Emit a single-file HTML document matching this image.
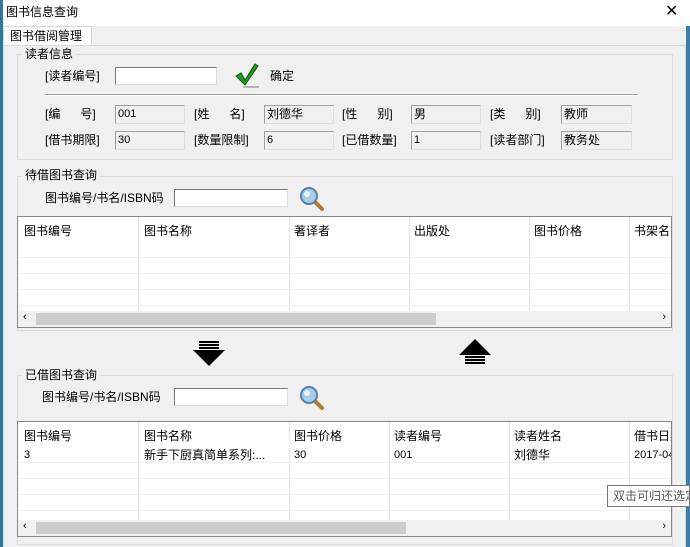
<!DOCTYPE html>
<html><head><meta charset="utf-8"><style>
*{margin:0;padding:0;box-sizing:border-box}
body{width:690px;height:547px;overflow:hidden;background:#f0f0f0;font-family:"Liberation Sans","Noto Sans CJK SC","WenQuanYi Zen Hei",sans-serif;font-size:12px;color:#000;position:relative}
.a{position:absolute;white-space:nowrap}
.t{font-size:12px;line-height:14px}
.ro{position:absolute;height:19px;background:#f0f0f0;border:1px solid #a0a0a0;border-right-color:#e0e0e0;border-bottom-color:#e0e0e0;font-size:11px;line-height:17px;padding-left:2px}
.in{position:absolute;background:#fff;border:1px solid #7a7a7a;border-right-color:#ddd;border-bottom-color:#ddd}
.gb{position:absolute;border:1px solid #dcdcdc}
.tbl{position:absolute;background:#fff;border:1px solid #828790;overflow:hidden}
.col{position:absolute;top:0;bottom:16px;border-left:1px solid #e5e5e5}
.row{position:absolute;left:0;right:0;border-top:1px solid #f0f0f0}
.sb{position:absolute;left:0;right:0;bottom:0;height:16px;background:#f0f0f0}
</style></head><body>
<div class="a" style="left:0;top:0;width:690px;height:26px;background:#fff"></div>
<div class="a t" style="left:6px;top:5px;font-size:12px">图书信息查询</div>
<div class="a" style="left:665px;top:2px;font-size:16px;line-height:20px">✕</div>
<div class="a" style="left:0;top:0;width:3px;height:547px;background:#2d7aa0"></div>
<div class="a" style="left:686px;top:26px;width:4px;height:521px;background:#3c7ea8"></div>
<div class="a" style="left:3px;top:26px;width:89px;height:20px;background:#fff;border:1px solid #d9d9d9;border-bottom:none"></div>
<div class="a t" style="left:10px;top:29px">图书借阅管理</div>
<div class="a" style="left:3px;top:45px;width:683px;height:502px;border:1px solid #d9d9d9;border-bottom:none;background:#f0f0f0"></div>

<div class="gb" style="left:17px;top:54px;width:656px;height:106px"></div>
<div class="a t" style="left:22px;top:47px;background:#f0f0f0;padding:0 3px">读者信息</div>
<div class="a t" style="left:45px;top:69px">[读者编号]</div>
<div class="in" style="left:115px;top:67px;width:102px;height:18px"></div>
<svg class="a" style="left:234px;top:62px" width="26" height="26" viewBox="0 0 26 26"><path d="M2 14 L7 11 L11 18 L21 2 L24 4 L11 23 Z" fill="#1f9a1f" stroke="#0c5a0c" stroke-width="1"/><line x1="9" y1="25" x2="25" y2="25" stroke="#777"/></svg>
<div class="a t" style="left:270px;top:69px">确定</div>
<div class="a" style="left:45px;top:94px;width:593px;height:2px;border-top:1px solid #a0a0a0;border-bottom:1px solid #fff"></div>

<div class="a t" style="left:45px;top:107px">[编&nbsp;&nbsp;&nbsp;&nbsp;&nbsp;&nbsp;号]</div>
<div class="ro" style="left:115px;top:105px;width:70px">001</div>
<div class="a t" style="left:194px;top:107px">[姓&nbsp;&nbsp;&nbsp;&nbsp;&nbsp;&nbsp;名]</div>
<div class="ro" style="left:264px;top:105px;width:70px;font-size:12px">刘德华</div>
<div class="a t" style="left:342px;top:107px">[性&nbsp;&nbsp;&nbsp;&nbsp;&nbsp;&nbsp;别]</div>
<div class="ro" style="left:411px;top:105px;width:70px;font-size:12px">男</div>
<div class="a t" style="left:490px;top:107px">[类&nbsp;&nbsp;&nbsp;&nbsp;&nbsp;&nbsp;别]</div>
<div class="ro" style="left:561px;top:105px;width:71px;font-size:12px">教师</div>

<div class="a t" style="left:45px;top:133px">[借书期限]</div>
<div class="ro" style="left:115px;top:131px;width:70px">30</div>
<div class="a t" style="left:194px;top:133px">[数量限制]</div>
<div class="ro" style="left:264px;top:131px;width:70px">6</div>
<div class="a t" style="left:342px;top:133px">[已借数量]</div>
<div class="ro" style="left:411px;top:131px;width:70px">1</div>
<div class="a t" style="left:490px;top:133px">[读者部门]</div>
<div class="ro" style="left:561px;top:131px;width:71px;font-size:12px">教务处</div>

<div class="gb" style="left:17px;top:176px;width:656px;height:155px"></div>
<div class="a t" style="left:22px;top:168px;background:#f0f0f0;padding:0 3px">待借图书查询</div>
<div class="a t" style="left:45px;top:191px">图书编号/书名/ISBN码</div>
<div class="in" style="left:174px;top:189px;width:114px;height:18px"></div>
<svg class="a" style="left:298px;top:185px" width="28" height="28" viewBox="0 0 28 28"><line x1="16" y1="16" x2="24" y2="24" stroke="#b5772a" stroke-width="4" stroke-linecap="round"/><circle cx="11" cy="11" r="8" fill="#a8cde8" stroke="#5a7fa8" stroke-width="2"/><circle cx="9" cy="9" r="3" fill="#e4f2fb"/></svg>
<div class="tbl" style="left:17px;top:216px;width:655px;height:112px">
 <div class="col" style="left:120px"></div><div class="col" style="left:271px"></div><div class="col" style="left:391px"></div><div class="col" style="left:511px"></div><div class="col" style="left:611px"></div>
 <div class="row" style="top:40px"></div><div class="row" style="top:56px"></div><div class="row" style="top:72px"></div><div class="row" style="top:88px"></div>
 <div class="a t" style="left:6px;top:7px">图书编号</div><div class="a t" style="left:126px;top:7px">图书名称</div><div class="a t" style="left:276px;top:7px">著译者</div><div class="a t" style="left:396px;top:7px">出版处</div><div class="a t" style="left:516px;top:7px">图书价格</div><div class="a t" style="left:616px;top:7px">书架名</div>
 <div class="sb"><div class="a" style="left:18px;top:2px;width:400px;height:12px;background:#cdcdcd"></div><div class="a" style="left:5px;top:0;font-size:11px">‹</div><div class="a" style="right:5px;top:0;font-size:11px">›</div></div>
</div>

<svg class="a" style="left:192px;top:340px" width="34" height="28" viewBox="0 0 34 28"><rect x="7" y="1" width="20" height="2"/><rect x="7" y="4" width="20" height="2"/><rect x="7" y="7" width="20" height="2"/><path d="M1 10 H33 L17 26 Z"/></svg>
<svg class="a" style="left:458px;top:337px" width="34" height="28" viewBox="0 0 34 28"><path d="M1 18 H33 L17 2 Z"/><rect x="7" y="19" width="20" height="2"/><rect x="7" y="22" width="20" height="2"/><rect x="7" y="25" width="20" height="2"/></svg>

<div class="gb" style="left:17px;top:375px;width:656px;height:170px"></div>
<div class="a t" style="left:22px;top:368px;background:#f0f0f0;padding:0 3px">已借图书查询</div>
<div class="a t" style="left:42px;top:390px">图书编号/书名/ISBN码</div>
<div class="in" style="left:174px;top:388px;width:114px;height:18px"></div>
<svg class="a" style="left:298px;top:384px" width="28" height="28" viewBox="0 0 28 28"><line x1="16" y1="16" x2="24" y2="24" stroke="#b5772a" stroke-width="4" stroke-linecap="round"/><circle cx="11" cy="11" r="8" fill="#a8cde8" stroke="#5a7fa8" stroke-width="2"/><circle cx="9" cy="9" r="3" fill="#e4f2fb"/></svg>
<div class="tbl" style="left:17px;top:421px;width:655px;height:116px">
 <div class="col" style="left:120px"></div><div class="col" style="left:271px"></div><div class="col" style="left:371px"></div><div class="col" style="left:491px"></div><div class="col" style="left:611px"></div>
 <div class="row" style="top:40px"></div><div class="row" style="top:56px"></div><div class="row" style="top:72px"></div><div class="row" style="top:88px"></div>
 <div class="a t" style="left:6px;top:7px">图书编号</div><div class="a t" style="left:126px;top:7px">图书名称</div><div class="a t" style="left:276px;top:7px">图书价格</div><div class="a t" style="left:376px;top:7px">读者编号</div><div class="a t" style="left:496px;top:7px">读者姓名</div><div class="a t" style="left:616px;top:7px">借书日期</div>
 <div class="a" style="left:6px;top:27px;font-size:11px">3</div><div class="a t" style="left:126px;top:26px">新手下厨真简单系列:...</div><div class="a" style="left:276px;top:27px;font-size:11px">30</div><div class="a" style="left:376px;top:27px;font-size:11px">001</div><div class="a t" style="left:496px;top:26px">刘德华</div><div class="a" style="left:616px;top:27px;font-size:11px">2017-04</div>
 <div class="sb"><div class="a" style="left:18px;top:2px;width:370px;height:12px;background:#cdcdcd"></div><div class="a" style="left:5px;top:0;font-size:11px">‹</div><div class="a" style="right:5px;top:0;font-size:11px">›</div></div>
</div>
<div class="a t" style="left:607px;top:485px;width:83px;height:22px;background:#fff;border:1px solid #767676;padding:3px 0 0 5px;color:#555;overflow:hidden">双击可归还选定</div>
</body></html>
